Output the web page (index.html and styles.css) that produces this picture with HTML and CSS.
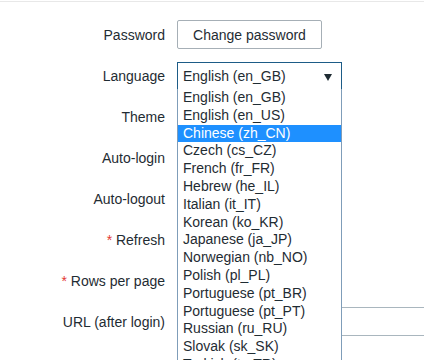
FILE: index.html
```html
<!DOCTYPE html>
<html>
<head>
    <title>User settings</title>
    <link rel="stylesheet" href="styles.css">
</head>
<body>
    <div class="topline"></div>
    <div class="form">
        <div class="row">
            <label class="label">Password</label>
            <div class="field"><button class="btn">Change password</button></div>
        </div>
        <div class="row">
            <label class="label">Language</label>
            <div class="field lang">
                <div class="select focus">English (en_GB)<span class="arrow"></span></div>
                <!-- open list of the language select -->
                <ul class="options">
                    <li>English (en_GB)</li>
                    <li>English (en_US)</li>
                    <li class="hover">Chinese (zh_CN)</li>
                    <li>Czech (cs_CZ)</li>
                    <li>French (fr_FR)</li>
                    <li>Hebrew (he_IL)</li>
                    <li>Italian (it_IT)</li>
                    <li>Korean (ko_KR)</li>
                    <li>Japanese (ja_JP)</li>
                    <li>Norwegian (nb_NO)</li>
                    <li>Polish (pl_PL)</li>
                    <li>Portuguese (pt_BR)</li>
                    <li>Portuguese (pt_PT)</li>
                    <li>Russian (ru_RU)</li>
                    <li>Slovak (sk_SK)</li>
                    <li>Turkish (tr_TR)</li>
                </ul>
            </div>
        </div>
        <div class="row">
            <label class="label">Theme</label>
            <div class="field"><div class="select small">System default</div></div>
        </div>
        <div class="row">
            <label class="label">Auto-login</label>
            <div class="field"><span class="checkbox"></span></div>
        </div>
        <div class="row">
            <label class="label">Auto-logout</label>
            <div class="field"><span class="checkbox"></span></div>
        </div>
        <div class="row">
            <label class="label"><span class="req">*</span> Refresh</label>
            <div class="field"><input class="input short" type="text" value="30s"></div>
        </div>
        <div class="row">
            <label class="label"><span class="req">*</span> Rows per page</label>
            <div class="field"><input class="input short" type="text" value="50"></div>
        </div>
        <div class="row">
            <label class="label">URL (after login)</label>
            <div class="field"><input class="input wide" type="text"></div>
        </div>
    </div>
</body>
</html>
```

FILE: styles.css
```css
/* General styles */
* {
  box-sizing: border-box;
}

html,
body {
  height: 100%;
}

body {
  margin: 0;
  min-height: 360px;
  font-family: "Liberation Sans", Arial, sans-serif;
  font-size: 14px;
  color: #1f2c33;
  background-color: #fff;
  overflow: hidden;
}

.topline {
  height: 1px;
  border-bottom: 1px solid #e8e8e8;
  box-sizing: content-box;
}

.form {
  padding-top: 18px;
  display: flex;
  flex-direction: column;
  gap: 12px;
  overflow: hidden;
  height: 358px;
}

.row {
  display: grid;
  grid-template-columns: 165px 1fr;
  column-gap: 12px;
  height: 29px;
  flex-shrink: 0;
  align-items: center;
}

.label {
  text-align: right;
}

.req {
  color: #e33734;
}

.field {
  position: relative;
  display: flex;
  align-items: center;
}

.btn {
  font-family: inherit;
  font-size: 14px;
  color: #1f2c33;
  background-color: #fff;
  border: 1px solid #a6afb6;
  border-radius: 2px;
  height: 29px;
  width: 145px;
  padding: 0;
  margin: 0;
}

.select {
  height: 28px;
  width: 165px;
  border: 1px solid #acbbc2;
  padding: 0 0 0 5px;
  line-height: 26px;
  position: relative;
  background-color: #fff;
}

.select.focus {
  border-color: #1d5c87;
  margin-top: 1px;
}

.select.small {
  width: 140px;
}

.arrow {
  position: absolute;
  right: 9px;
  top: 11px;
  border-left: 4px solid transparent;
  border-right: 4px solid transparent;
  border-top: 7px solid #1f2c33;
}

.checkbox {
  width: 16px;
  height: 16px;
  border: 1px solid #acbbc2;
}

.input {
  font-family: inherit;
  font-size: 14px;
  height: 29px;
  border: 1px solid #a9b6be;
  padding: 0 5px;
  margin: 0;
}

.input.short {
  width: 75px;
}

.input.wide {
  width: 453px;
}

/* the open language list lies over the rows below */
.options {
  position: absolute;
  top: 28px;
  left: 0;
  z-index: 10;
  width: 165px;
  margin: 0;
  padding: 0;
  list-style: none;
  background-color: #fff;
  border: 1px solid #7f9db9;
  border-top: none;
  color: #1f2c33;
}

.options li {
  height: 17.8px;
  line-height: 17.8px;
  padding-left: 5px;
  white-space: nowrap;
}

.options li.hover {
  background-color: #1e90ff;
  color: #fff;
}
```
